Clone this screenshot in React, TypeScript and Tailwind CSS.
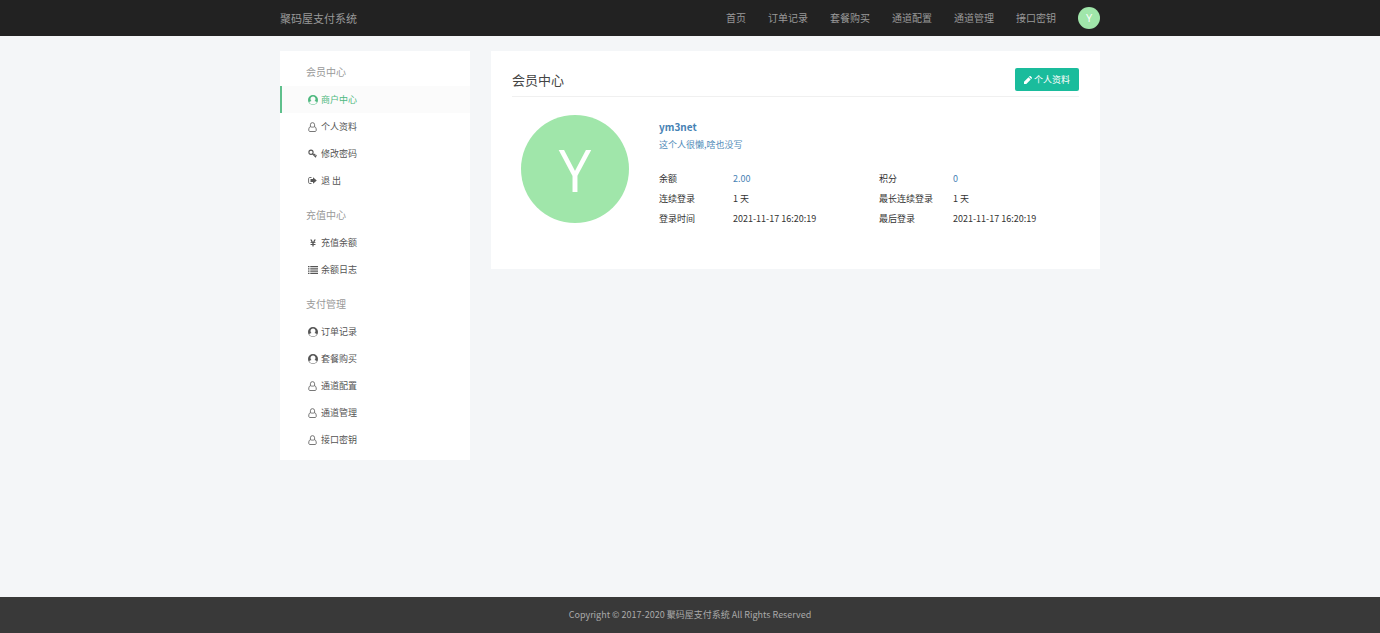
import type { ReactNode } from "react";
import { FaYenSign } from "react-icons/fa";

interface MenuItem {
  label: string;
  icon: ReactNode;
  active?: boolean;
}

interface MenuGroup {
  title: string;
  items: MenuItem[];
}

function UserCircle() {
  return (
    <svg width="10" height="10" viewBox="0 0 20 20" fill="currentColor" aria-hidden="true">
      <path
        fillRule="evenodd"
        d="M10 0a10 10 0 1 1 0 20a10 10 0 0 1 0-20zM10 3.200c-3 0-5 2-5 4.800 0 1.800.8 3.300 2 4.200-2.300.2-3.800 1.200-4.600 2.800a9 9 0 0 0 15.200 0c-.8-1.600-2.300-2.600-4.600-2.800 1.200-.9 2-2.400 2-4.200 0-2.800-2-4.800-5-4.800z"
      />
    </svg>
  );
}

function UserOutline() {
  return (
    <svg width="9" height="10" viewBox="0 0 18 20" fill="none" stroke="currentColor" strokeWidth="1.6" aria-hidden="true">
      <path d="M4.800 9.500V5.500a4.200 4.200 0 0 1 8.400 0v4" />
      <path d="M4.800 9.500C2.500 10 1.500 12.500 1.500 16c0 2 1 3 2.500 3h10c1.500 0 2.500-1 2.500-3 0-3.500-1-6-3.300-6.500-2.400 1-6 1-8.400 0z" />
    </svg>
  );
}

function Key() {
  return (
    <svg width="9" height="9" viewBox="0 0 18 18" fill="none" stroke="currentColor" strokeWidth="2.2" aria-hidden="true">
      <circle cx="6" cy="6.500" r="4.200" />
      <path d="M9 9.500l7 7M12 12.500l2.500-2.500M14.500 15l2.500-2.500" />
    </svg>
  );
}

function SignOut() {
  return (
    <svg width="9" height="9" viewBox="0 0 18 18" fill="none" aria-hidden="true">
      <path d="M7 3H3.500C2 3 1.200 4 1.200 5.200v7.600C1.200 14 2 15 3.500 15H7" stroke="currentColor" strokeWidth="1.700" />
      <path d="M10 2.500L17.500 9 10 15.500V12H5V6h5z" fill="currentColor" />
    </svg>
  );
}

function ListRows() {
  return (
    <svg width="10" height="8" viewBox="0 0 20 16" fill="currentColor" aria-hidden="true">
      <path d="M0 0h3v2.500H0zM4.500 0H20v2.500H4.500zM0 4.500h3V7H0zM4.500 4.500H20V7H4.500zM0 9h3v2.500H0zM4.500 9H20v2.500H4.500zM0 13.500h3V16H0zM4.500 13.500H20V16H4.500z" />
    </svg>
  );
}

function Pencil() {
  return (
    <svg width="8" height="8" viewBox="0 0 16 16" fill="currentColor" aria-hidden="true">
      <path d="M0 16v-4.500L9 2.500 13.500 7l-9 9zM10 1.500L11 .6c.7-.7 1.600-.7 2.300 0l2.100 2.100c.7.7.7 1.600 0 2.300l-.9 1z" />
    </svg>
  );
}

const navLinks = ["首页", "订单记录", "套餐购买", "通道配置", "通道管理", "接口密钥"];

const menu: MenuGroup[] = [
  {
    title: "会员中心",
    items: [
      { label: "商户中心", icon: <UserCircle />, active: true },
      { label: "个人资料", icon: <UserOutline /> },
      { label: "修改密码", icon: <Key /> },
      { label: "退 出", icon: <SignOut /> },
    ],
  },
  {
    title: "充值中心",
    items: [
      { label: "充值余额", icon: <FaYenSign size={8} /> },
      { label: "余额日志", icon: <ListRows /> },
    ],
  },
  {
    title: "支付管理",
    items: [
      { label: "订单记录", icon: <UserCircle /> },
      { label: "套餐购买", icon: <UserCircle /> },
      { label: "通道配置", icon: <UserOutline /> },
      { label: "通道管理", icon: <UserOutline /> },
      { label: "接口密钥", icon: <UserOutline /> },
    ],
  },
];

const stats = [
  { label: "余额", value: "2.00", link: true },
  { label: "积分", value: "0", link: true },
  { label: "连续登录", value: "1 天" },
  { label: "最长连续登录", value: "1 天" },
  { label: "登录时间", value: "2021-11-17 16:20:19" },
  { label: "最后登录", value: "2021-11-17 16:20:19" },
];

function Header() {
  return (
    <header className="bg-[#222]">
      <div className="mx-auto flex h-9 max-w-[820px] items-center justify-between text-[#999]">
        <a href="#" className="text-[11px] leading-4">聚码屋支付系统</a>
        <nav className="flex items-center gap-[22px] text-[10px] leading-4">
          {navLinks.map((label) => (
            <a key={label} href="#">{label}</a>
          ))}
          <a
            href="#"
            className="flex size-[22px] items-center justify-center rounded-full bg-[#a0e6aa] font-['Open_Sans',sans-serif] text-[11px] text-white"
          >
            Y
          </a>
        </nav>
      </div>
    </header>
  );
}

function Sidebar() {
  return (
    <aside className="w-[190px] shrink-0 bg-white pt-3 pb-[7px]">
      {menu.map((group) => (
        <section key={group.title} className="mb-3 last:mb-0">
          <h2 className="mb-[5px] pl-[26px] text-[10px] leading-[18px] text-[#999]">{group.title}</h2>
          <ul>
            {group.items.map(({ label, icon, active }) => (
              <li key={label}>
                <a
                  href="#"
                  className={
                    active
                      ? "flex h-[27px] items-center gap-[3px] border-l-2 border-[#5fc08c] bg-[#fbfbfb] pl-[25px] leading-3 text-[#4db87e]"
                      : "flex h-[27px] items-center gap-[3px] border-l-2 border-transparent pl-[25px] leading-3 text-[#555]"
                  }
                >
                  <span className="flex w-[11px] justify-center">{icon}</span>
                  {label}
                </a>
              </li>
            ))}
          </ul>
        </section>
      ))}
    </aside>
  );
}

function Profile() {
  return (
    <main className="min-w-0 flex-1 bg-white px-[21px] pt-[17px] pb-10">
      <div className="flex items-center justify-between border-b border-[#f0f0f0] pb-[5px]">
        <h1 className="text-[13px] leading-[18px] text-[#444]">会员中心</h1>
        <button
          type="button"
          className="flex h-[23px] items-center gap-[2px] rounded-xs bg-[#1abc9c] px-[9px] text-white"
        >
          <Pencil />
          个人资料
        </button>
      </div>
      <div className="flex gap-[30px] pt-[18px] pl-[9px]">
        <div className="flex size-[108px] shrink-0 items-center justify-center rounded-full bg-[#a0e6aa] font-['Open_Sans',sans-serif] text-[58px] text-white">
          Y
        </div>
        <div className="min-w-0 flex-1 pt-[3px]">
          <a href="#" className="block text-[10px] leading-[18px] font-bold text-[#4682b4]">ym3net</a>
          <a href="#" className="block leading-[18px] text-[#4f8ab8]">这个人很懒,啥也没写</a>
          <dl className="-mr-5 mt-[15px] grid grid-cols-2 leading-5 text-[#333]">
            {stats.map(({ label, value, link }) => (
              <div key={label} className="flex">
                <dt className="w-[74px]">{label}</dt>
                <dd>{link ? <a href="#" className="text-[#4682b4]">{value}</a> : value}</dd>
              </div>
            ))}
          </dl>
        </div>
      </div>
    </main>
  );
}

export default function App() {
  return (
    <div className="flex min-h-screen flex-col bg-[#f4f6f8] font-['Noto_Sans_CJK_SC',sans-serif] text-[9px]">
      <Header />
      <div className="mx-auto flex w-full max-w-[820px] flex-1 items-start gap-[21px] pt-[15px] pb-6">
        <Sidebar />
        <Profile />
      </div>
      <footer className="flex h-9 items-center justify-center bg-[#393939] text-[#aaa]">
        Copyright © 2017-2020 聚码屋支付系统 All Rights Reserved
      </footer>
    </div>
  );
}
